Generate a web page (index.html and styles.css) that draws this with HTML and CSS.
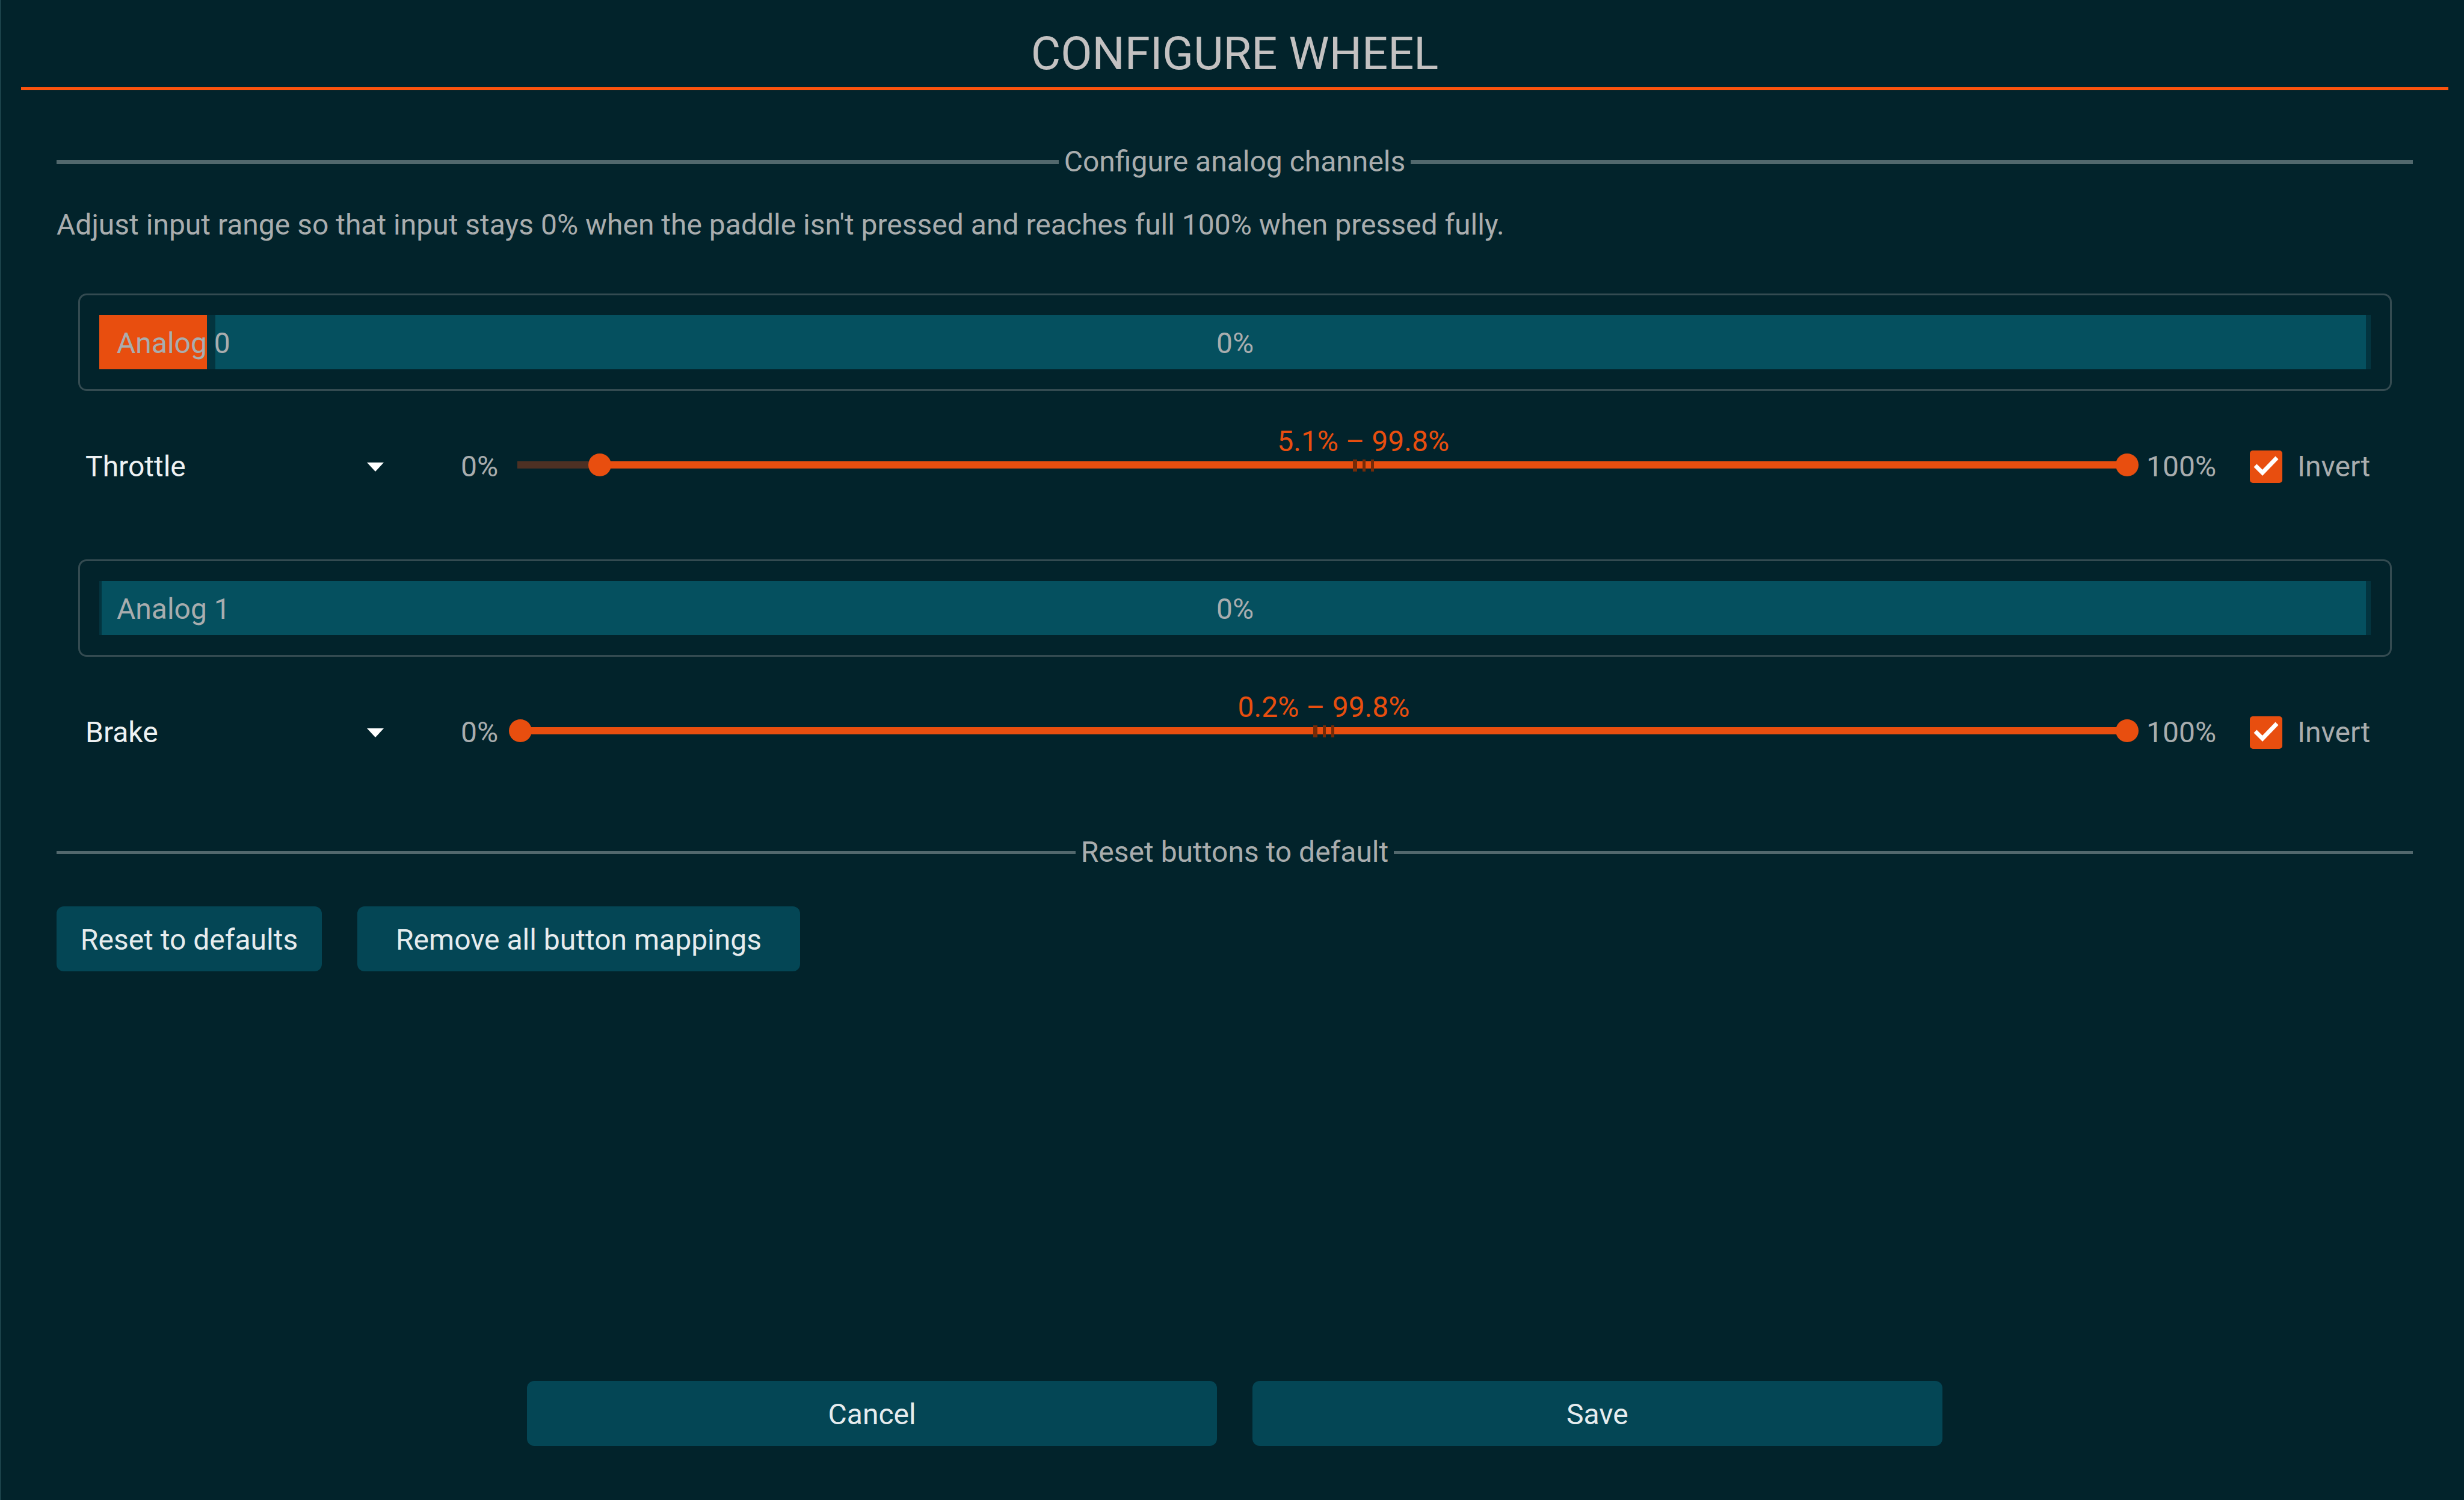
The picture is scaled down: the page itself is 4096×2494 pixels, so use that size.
FILE: index.html
```html
<!DOCTYPE html>
<html lang="en">
<head>
<meta charset="utf-8">
<title>Configure wheel</title>
<link rel="stylesheet" href="styles.css">
</head>
<body>
<main class="dialog">
  <header class="dialog-header"><h1 class="title">CONFIGURE WHEEL</h1></header>

  <section class="section">
    <h2 class="divider">Configure analog channels</h2>
    <p class="hint">Adjust input range so that input stays 0% when the paddle isn't pressed and reaches full 100% when pressed fully.</p>

    <div class="channel">
      <div class="meter-box">
        <div class="meter">
          <div class="meter-range" style="left: 5.1%; right: 0.2%"></div>
          <div class="meter-value" style="width: 4.75%"></div>
          <span class="meter-name">Analog 0</span>
          <span class="meter-percent">0%</span>
        </div>
      </div>
      <div class="controls">
        <div class="picker">
          <select class="select" aria-label="Analog 0 function"><option>Throttle</option><option>Brake</option></select>
          <svg class="arrow" viewBox="0 0 28 15"><path d="M0 0H28L14 15Z"/></svg>
        </div>
        <span class="bound bound-min">0%</span>
        <div class="slider">
          <div class="track">
            <div class="track-fill" style="left: 5.1%; right: 0.2%">
              <output class="track-label">5.1% – 99.8%</output>
              <span class="grip"><i class="tick tick-wide"></i><i class="tick"></i><i class="tick"></i></span>
            </div>
          </div>
          <input class="range" type="range" min="0" max="100" step="0.1" value="5.1" aria-label="Analog 0 minimum">
          <input class="range" type="range" min="0" max="100" step="0.1" value="99.8" aria-label="Analog 0 maximum">
        </div>
        <span class="bound bound-max">100%</span>
        <label class="invert"><input class="check" type="checkbox" checked><svg class="check-mark" viewBox="0 0 54 54"><path d="M9 25L21 37L45 12"/></svg>Invert</label>
      </div>
    </div>

    <div class="channel">
      <div class="meter-box">
        <div class="meter">
          <div class="meter-range" style="left: 0.1%; right: 0.2%"></div>
          <span class="meter-name">Analog 1</span>
          <span class="meter-percent">0%</span>
        </div>
      </div>
      <div class="controls">
        <div class="picker">
          <select class="select" aria-label="Analog 1 function"><option>Brake</option><option>Throttle</option></select>
          <svg class="arrow" viewBox="0 0 28 15"><path d="M0 0H28L14 15Z"/></svg>
        </div>
        <span class="bound bound-min">0%</span>
        <div class="slider">
          <div class="track">
            <div class="track-fill" style="left: 0.2%; right: 0.2%">
              <output class="track-label">0.2% – 99.8%</output>
              <span class="grip"><i class="tick tick-wide"></i><i class="tick"></i><i class="tick"></i></span>
            </div>
          </div>
          <input class="range" type="range" min="0" max="100" step="0.1" value="0.2" aria-label="Analog 1 minimum">
          <input class="range" type="range" min="0" max="100" step="0.1" value="99.8" aria-label="Analog 1 maximum">
        </div>
        <span class="bound bound-max">100%</span>
        <label class="invert"><input class="check" type="checkbox" checked><svg class="check-mark" viewBox="0 0 54 54"><path d="M9 25L21 37L45 12"/></svg>Invert</label>
      </div>
    </div>
  </section>

  <section class="section">
    <h2 class="divider divider-thin">Reset buttons to default</h2>
    <div class="actions">
      <button class="button button-reset" type="button">Reset to defaults</button>
      <button class="button button-remove" type="button">Remove all button mappings</button>
    </div>
  </section>

  <footer class="footer">
    <button class="button" type="button">Cancel</button>
    <button class="button" type="button">Save</button>
  </footer>
</main>
</body>
</html>
```

FILE: styles.css
```css
:root {
  --bg: #02232b;
  --accent: #e84e0f;
  --button: #044655;
  --text: #a9adae;
  --knob: 38px;
}

* { box-sizing: border-box; }

body {
  margin: 0;
  background: var(--bg);
  color: var(--text);
  font: 48px/60px Roboto, "Open Sans", sans-serif;
}

.dialog {
  display: flex;
  flex-direction: column;
  min-height: 100vh;
  padding: 0 26px 90px 33px;
  border-left: 2px solid #1b424a;
}

.dialog-header {
  height: 150px;
  padding-top: 44px;
  border-bottom: 5px solid #fb530e;
}

.title {
  margin: 0;
  color: #c3c1c1;
  font-size: 76px;
  font-weight: 400;
  line-height: 90px;
  text-align: center;
}

.section { padding: 0 59px; }

.divider {
  display: flex;
  align-items: center;
  gap: 9px;
  margin: 89px 0 0;
  font-size: 48px;
  font-weight: 400;
}

.divider::before,
.divider::after {
  content: "";
  flex: 1;
  height: 7px;
  background: #52686d;
}

.divider-thin { margin-top: 15px; }
.divider-thin::before,
.divider-thin::after { height: 5px; }

.hint { margin: 45px 0 84px; }

.channel {
  height: 442px;
  padding: 0 35px 0 36px;
}

.meter-box {
  height: 162px;
  padding: 33px 32px;
  border: 3px solid #344b51;
  border-radius: 14px;
}

.meter {
  position: relative;
  display: grid;
  grid-template-columns: 1fr auto 1fr;
  align-items: center;
  height: 90px;
  padding: 4px 29px 0;
  background: #03343f;
}

.meter-range,
.meter-value {
  position: absolute;
  top: 0;
  bottom: 0;
}

.meter-range { background: #05505f; }
.meter-value { left: 0; background: var(--accent); }
.meter-name,
.meter-percent { position: relative; }

.controls {
  display: flex;
  align-items: center;
  height: 60px;
  margin: 96px 36px 0 12px;
}

.picker {
  display: grid;
  align-items: center;
  width: 508px;
}

.select {
  grid-area: 1 / 1;
  width: 100%;
  padding: 0;
  border: 0;
  appearance: none;
  background: none;
  color: #eef2f3;
  font: inherit;
}

.arrow {
  grid-area: 1 / 1;
  justify-self: end;
  width: 28px;
  height: 15px;
  margin-right: 12px;
  fill: #fff;
  pointer-events: none;
}

.bound-min { width: 75px; margin-left: 116px; }
.bound-max { width: 172px; margin-left: 8px; }

.slider {
  position: relative;
  flex: 1;
  height: 60px;
}

.track {
  position: absolute;
  top: 21px;
  left: 19px;
  right: 19px;
  height: 12px;
  background: #4d3023;
}

.track-fill {
  position: absolute;
  top: 0;
  bottom: 0;
  display: flex;
  justify-content: center;
  background: var(--accent);
}

.track-label {
  position: absolute;
  bottom: 15px;
  color: var(--accent);
  white-space: nowrap;
}

.grip {
  position: absolute;
  top: -3px;
  display: flex;
  gap: 9px;
}

.tick { width: 5px; height: 20px; background: #742a08; }
.tick-wide { width: 7px; }

.range {
  position: absolute;
  top: 8px;
  left: 0;
  width: 100%;
  height: var(--knob);
  margin: 0;
  appearance: none;
  background: none;
  pointer-events: none;
}

.range::-webkit-slider-thumb {
  width: var(--knob);
  height: var(--knob);
  appearance: none;
  border-radius: 50%;
  background: var(--accent);
  pointer-events: auto;
}

.invert {
  display: grid;
  grid-template-columns: 54px 121px;
  align-items: center;
  column-gap: 25px;
}

.check {
  grid-area: 1 / 1;
  width: 54px;
  height: 54px;
  margin: 0;
  appearance: none;
  border-radius: 5px;
  background: var(--accent);
}

.check-mark {
  grid-area: 1 / 1;
  z-index: 1;
  width: 54px;
  height: 54px;
  fill: none;
  stroke: #fff;
  stroke-width: 7px;
  pointer-events: none;
}

.actions {
  display: flex;
  gap: 59px;
  margin-top: 60px;
}

.button {
  height: 108px;
  padding: 3px 0 0;
  border: 0;
  border-radius: 12px;
  background: var(--button);
  color: #e6ecee;
  font: inherit;
}

.button-reset { width: 441px; }
.button-remove { width: 736px; }

.footer {
  display: grid;
  grid-template-columns: 1fr 1fr;
  gap: 59px;
  width: 58.3%;
  margin: auto auto 0;
}
```
